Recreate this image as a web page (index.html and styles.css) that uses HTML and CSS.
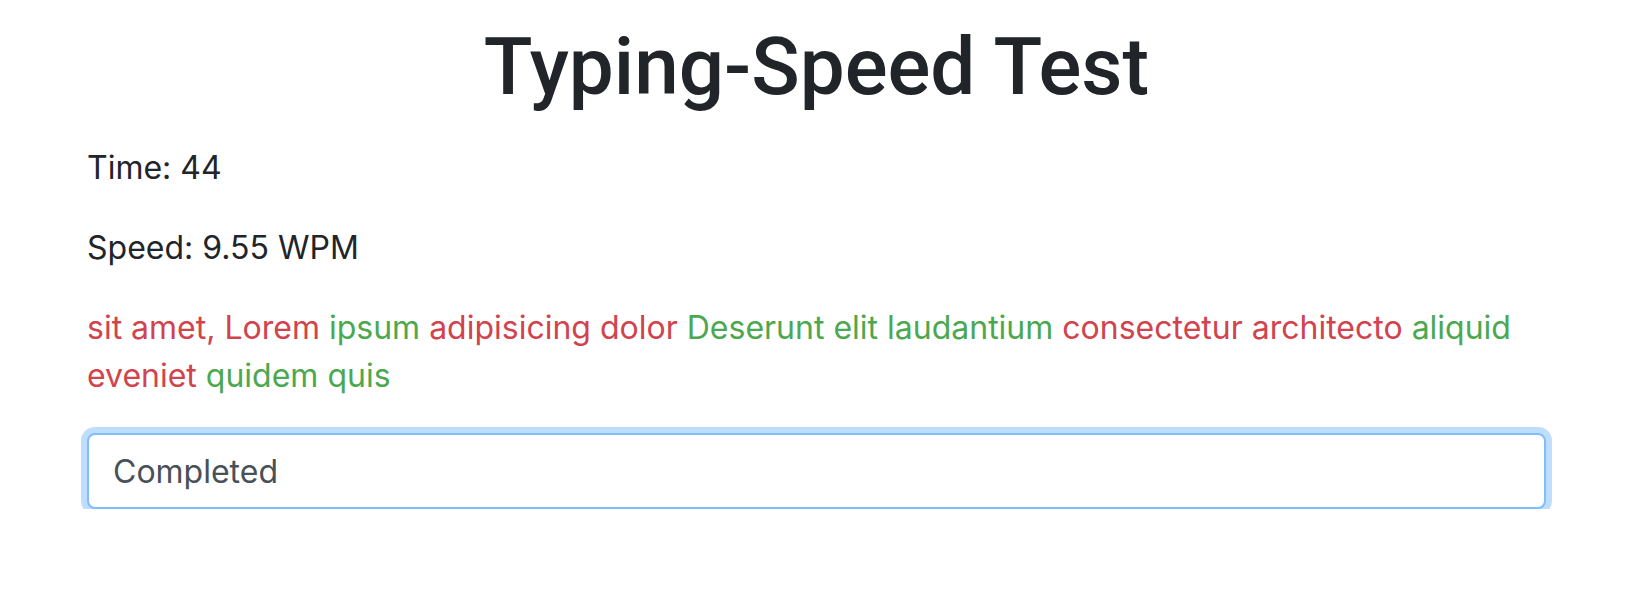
FILE: index.html
```html
<!DOCTYPE html>
<html lang="en">
<head>
<meta charset="utf-8">
<title>Typing-Speed Test</title>
<link rel="stylesheet" href="styles.css">
</head>
<body>
<div class="container">
  <h1 class="title">Typing-Speed Test</h1>
  <p class="stat">Time: 44</p>
  <p class="stat">Speed: 9.55 WPM</p>
  <p class="words"><span class="bad">sit amet,</span> <span class="bad">Lorem</span> <span class="good">ipsum</span> <span class="bad">adipisicing</span> <span class="bad">dolor</span> <span class="good">Deserunt</span> <span class="good">elit</span> <span class="good">laudantium</span> <span class="bad">consectetur</span> <span class="bad">architecto</span> <span class="good">aliquid</span> <span class="bad">eveniet</span> <span class="good">quidem</span> <span class="good">quis</span></p>
  <input class="field" type="text" value="Completed">
</div>
</body>
</html>
```

FILE: styles.css
```css
html, body {
  margin: 0;
  padding: 0;
  background: #ffffff;
}
body {
  font-family: Inter, "Liberation Sans", Arial, sans-serif;
  font-size: 32px;
  line-height: 1.5;
  color: #212529;
}
.container {
  padding: 19px 94px 0 87px;
}
.title {
  margin: 0 0 29px;
  font-family: Roboto, "Liberation Sans", Arial, sans-serif;
  font-size: 80px;
  font-weight: 500;
  line-height: 1.2;
  text-align: center;
  color: #212529;
}
.stat {
  margin: 0 0 32px;
}
.words {
  margin: 0 0 33px;
}
.bad { color: #d1434d; }
.good { color: #4ca84f; }
.field {
  display: block;
  box-sizing: border-box;
  width: 100%;
  height: 76px;
  margin: 0;
  padding: 12px 24px;
  font-family: inherit;
  font-size: 32px;
  line-height: 1.5;
  color: #495057;
  background: #ffffff;
  border: 2px solid #80bdff;
  border-radius: 8px;
  box-shadow: 0 0 0 6px rgba(0, 123, 255, 0.25);
  outline: none;
}
```
